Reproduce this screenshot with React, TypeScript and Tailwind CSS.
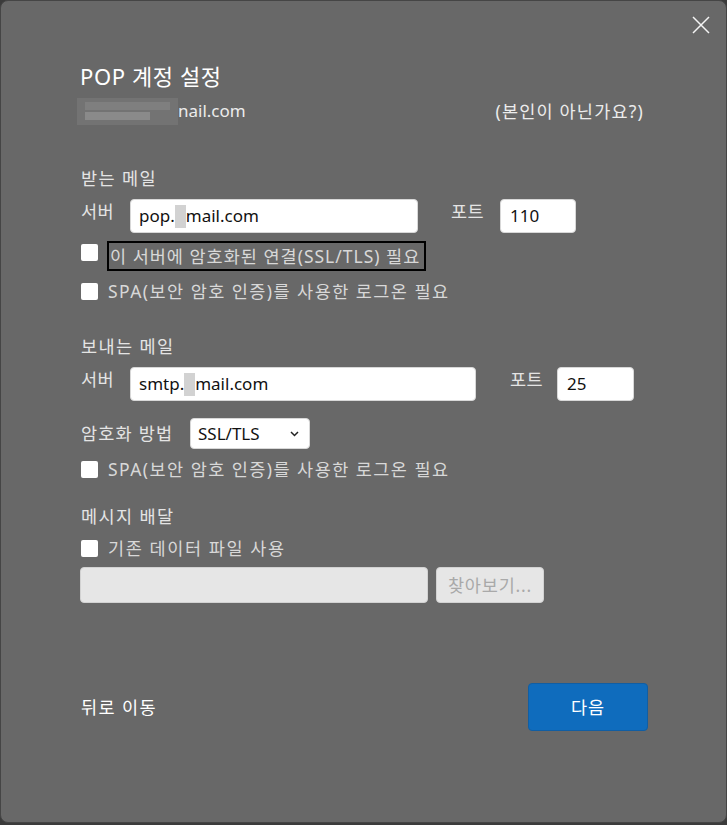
import React from "react";

const font = { fontFamily: '"Noto Sans", "Noto Sans CJK KR", sans-serif' };

const Box = () => <div className="w-[17px] h-[17px] bg-white rounded-[2px] shrink-0" />;

const Masked = ({ pre, post }: { pre: string; post: string }) => (
  <span className="flex items-center">
    <span>{pre}</span>
    <span className="inline-block w-[11px] h-[23px] bg-[#d2d2d2]" />
    <span>{post}</span>
  </span>
);

export default function App() {
  return (
    <div className="w-[727px] h-[825px] bg-[#3b3b3b]" style={font}>
      <div className="w-[727px] h-[823px] bg-[#686868] border border-[#454545] rounded-[8px] text-[17.5px] text-[#ececec]">
        {/* close */}
        <div className="flex justify-end pr-[16px] pt-[15px]">
          <svg width="18" height="18" viewBox="0 0 18 18">
            <path d="M1 1 L17 17 M17 1 L1 17" stroke="#f4f4f4" strokeWidth="1.5" />
          </svg>
        </div>

        <div className="pl-[79px] pr-[78px]">
          <h1 className="mt-[28px] text-[22px] leading-[28px] text-white tracking-[0.6px]">POP 계정 설정</h1>

          <div className="mt-[7px] h-[28px] flex items-center justify-between pr-[4px]">
            <div className="flex items-center -ml-[3px]">
              <div className="w-[101px] h-[27px] bg-[#737373] flex flex-col justify-center gap-[2px] px-[8px]">
                <div className="h-[8px] bg-[#7f7f7f]" />
                <div className="h-[8px] bg-[#8a8a8a] mr-[20px]" />
              </div>
              <span className="leading-[28px] text-[17px]">nail.com</span>
            </div>
            <span className="leading-[28px] tracking-[1.2px]">(본인이 아닌가요?)</span>
          </div>

          <div className="mt-[41px] leading-[24px] text-[#e4e4e4] pl-[1px] tracking-[1.4px]">받는 메일</div>
          <div className="mt-[9px] flex items-start">
            <span className="w-[50px] leading-[24px] text-[#e4e4e4] pl-[1px] tracking-[0.5px]">서버</span>
            <div className="w-[288px] h-[34px] bg-white rounded-[4px] border border-[#d8d8d8] flex items-center pl-[8px] text-[#111] text-[17px]">
              <Masked pre="pop." post="mail.com" />
            </div>
            <span className="ml-[33px] w-[49px] leading-[24px] text-[#e4e4e4] tracking-[0.5px]">포트</span>
            <div className="w-[76px] h-[34px] bg-white rounded-[4px] border border-[#d8d8d8] flex items-center pl-[9px] text-[#111] text-[17px]">110</div>
          </div>

          <div className="mt-[8px] h-[30px] flex items-start">
            <div className="mt-[3px] ml-[1px]"><Box /></div>
            <div className="ml-[9px] w-[319px] h-[30px] border-2 border-black flex items-center px-[1px] text-[#d8d8d8] tracking-[1px] whitespace-nowrap">
              이 서버에 암호화된 연결(SSL/TLS) 필요
            </div>
          </div>
          <div className="mt-[8px] h-[24px] flex items-center gap-[10px] pl-[1px] text-[#d8d8d8] tracking-[1.45px]">
            <Box />
            <span>SPA(보안 암호 인증)를 사용한 로그온 필요</span>
          </div>

          <div className="mt-[31px] leading-[24px] text-[#e4e4e4] pl-[1px] tracking-[1.4px]">보내는 메일</div>
          <div className="mt-[9px] flex items-start">
            <span className="w-[50px] leading-[24px] text-[#e4e4e4] pl-[1px] tracking-[0.5px]">서버</span>
            <div className="w-[346px] h-[34px] bg-white rounded-[4px] border border-[#d8d8d8] flex items-center pl-[8px] text-[#111] text-[17px]">
              <Masked pre="smtp." post="mail.com" />
            </div>
            <span className="ml-[34px] w-[47px] leading-[24px] text-[#e4e4e4] tracking-[0.5px]">포트</span>
            <div className="w-[77px] h-[34px] bg-white rounded-[4px] border border-[#d8d8d8] flex items-center pl-[9px] text-[#111] text-[17px]">25</div>
          </div>

          <div className="mt-[17px] h-[31px] flex items-center">
            <span className="w-[110px] text-[#e4e4e4] pl-[1px] tracking-[1.2px]">암호화 방법</span>
            <div className="w-[120px] h-[31px] bg-white rounded-[4px] border border-[#d8d8d8] flex items-center justify-between pl-[7px] pr-[10px] text-[#111] text-[17px]">
              <span>SSL/TLS</span>
              <svg width="9" height="6" viewBox="0 0 9 6">
                <path d="M1 1 L4.5 4.5 L8 1" stroke="#222" strokeWidth="1.5" fill="none" />
              </svg>
            </div>
          </div>
          <div className="mt-[8px] h-[24px] flex items-center gap-[10px] pl-[1px] text-[#d8d8d8] tracking-[1.45px]">
            <Box />
            <span>SPA(보안 암호 인증)를 사용한 로그온 필요</span>
          </div>

          <div className="mt-[23px] leading-[24px] text-[#e4e4e4] pl-[1px] tracking-[1.4px]">메시지 배달</div>
          <div className="mt-[8px] h-[24px] flex items-center gap-[10px] pl-[1px] text-[#d8d8d8] tracking-[1.6px]">
            <Box />
            <span>기존 데이터 파일 사용</span>
          </div>
          <div className="mt-[7px] flex gap-[8px]">
            <div className="w-[348px] h-[36px] bg-[#e6e6e6] rounded-[4px] border border-[#d2d2d2]" />
            <div className="w-[108px] h-[36px] bg-[#e6e6e6] rounded-[4px] border border-[#d2d2d2] flex items-center justify-center text-[#a9a9a9] tracking-[0.8px]">
              찾아보기...
            </div>
          </div>

          <div className="mt-[80px] flex items-center justify-between">
            <span className="text-white pl-[1px] tracking-[1.4px]">뒤로 이동</span>
            <button className="w-[120px] h-[48px] bg-[#0f6cbd] border border-[#115ea3] rounded-[4px] text-white text-[17.5px] tracking-[1px]">
              다음
            </button>
          </div>
        </div>
      </div>
    </div>
  );
}
